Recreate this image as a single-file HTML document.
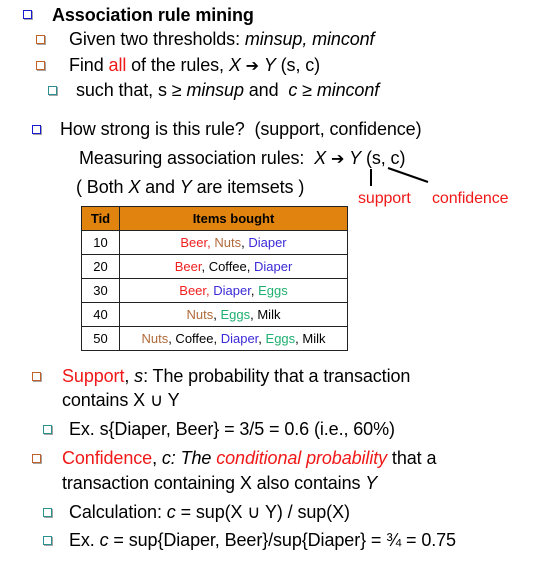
<!DOCTYPE html><html><head><style>
body{margin:0;width:548px;height:564px;background:#fff;position:relative;overflow:hidden;font-family:"Liberation Sans",sans-serif;color:#000}
.l{position:absolute;white-space:nowrap;font-size:18px;line-height:20px;letter-spacing:-0.1px}
.b{position:absolute;width:7px;height:7px;border:1.5px solid;box-shadow:1px 1px 0 rgba(0,0,0,.35)}
.bl{border-color:#1a1ad0}.or{border-color:#c0602a}.te{border-color:#2a9090}
.r{color:#f01818}
.ar{font-family:"DejaVu Sans",sans-serif;font-weight:bold;font-size:16px}
table{position:absolute;left:81px;top:206px;width:267px;border-collapse:collapse;font-size:13px}
td,th{border:1.5px solid #222;height:23px;padding:0;text-align:center}
th{background:#e0840f;font-weight:bold}
.be{color:#f02020}.nu{color:#b06a3a}.di{color:#3a2ad8}.eg{color:#20b070}
</style></head><body>
<div class="b bl" style="left:23px;top:10px"></div>
<div class="l" style="left:52px;top:5px;font-weight:bold;font-size:18px">Association rule mining</div>
<div class="b or" style="left:36px;top:35px"></div>
<div class="l" style="left:69px;top:29px">Given two thresholds: <i>minsup, minconf</i></div>
<div class="b or" style="left:36px;top:61px"></div>
<div class="l" style="left:69px;top:55px">Find <span class="r">all</span> of the rules, <i>X</i> <span class="ar">➔</span> <i>Y</i> (s, c)</div>
<div class="b te" style="left:48px;top:86px"></div>
<div class="l" style="left:76px;top:80px">such that, s ≥ <i>minsup</i> and&nbsp; <i>c</i> ≥ <i>minconf</i></div>
<div class="b bl" style="left:32px;top:125px"></div>
<div class="l" style="left:60px;top:119px">How strong is this rule?&nbsp; (support, confidence)</div>
<div class="l" style="left:79px;top:148px">Measuring association rules:&nbsp; <i>X</i> <span class="ar">➔</span> <i>Y</i> (s, c)</div>
<div class="l" style="left:76px;top:177px">( Both <i>X</i> and <i>Y</i> are itemsets )</div>
<svg style="position:absolute;left:0;top:0" width="548" height="564"><line x1="371" y1="169" x2="371" y2="186" stroke="#000" stroke-width="2"/><line x1="388" y1="168" x2="428" y2="182" stroke="#000" stroke-width="2"/></svg>
<div class="l r" style="left:358px;top:189px;font-size:16px">support</div>
<div class="l r" style="left:432px;top:189px;font-size:16px">confidence</div>
<table>
<tr><th style="width:37px">Tid</th><th>Items bought</th></tr>
<tr><td>10</td><td><span class="be">Beer,</span> <span class="nu">Nuts</span>, <span class="di">Diaper</span></td></tr>
<tr><td>20</td><td><span class="be">Beer</span>, Coffee, <span class="di">Diaper</span></td></tr>
<tr><td>30</td><td><span class="be">Beer,</span> <span class="di">Diaper</span>, <span class="eg">Eggs</span></td></tr>
<tr><td>40</td><td><span class="nu">Nuts</span>, <span class="eg">Eggs</span>, Milk</td></tr>
<tr><td>50</td><td><span class="nu">Nuts</span>, Coffee, <span class="di">Diaper</span>, <span class="eg">Eggs</span>, Milk</td></tr>
</table>
<div class="b or" style="left:32px;top:372px"></div>
<div class="l" style="left:62px;top:366px"><span class="r">Support</span>, <i>s</i>: The probability that a transaction</div>
<div class="l" style="left:62px;top:390px">contains X ∪ Y</div>
<div class="b te" style="left:43px;top:425px"></div>
<div class="l" style="left:69px;top:419px">Ex. s{Diaper, Beer} = 3/5 = 0.6 (i.e., 60%)</div>
<div class="b or" style="left:32px;top:454px"></div>
<div class="l" style="left:62px;top:448px"><span class="r">Confidence</span>, <i>c: The <span class="r">conditional probability</span></i> that a</div>
<div class="l" style="left:62px;top:473px">transaction containing X also contains <i>Y</i></div>
<div class="b te" style="left:43px;top:508px"></div>
<div class="l" style="left:69px;top:502px">Calculation: <i>c</i> = sup(X ∪ Y) / sup(X)</div>
<div class="b te" style="left:43px;top:536px"></div>
<div class="l" style="left:69px;top:530px">Ex. <i>c</i> = sup{Diaper, Beer}/sup{Diaper} = ¾ = 0.75</div>
</body></html>
